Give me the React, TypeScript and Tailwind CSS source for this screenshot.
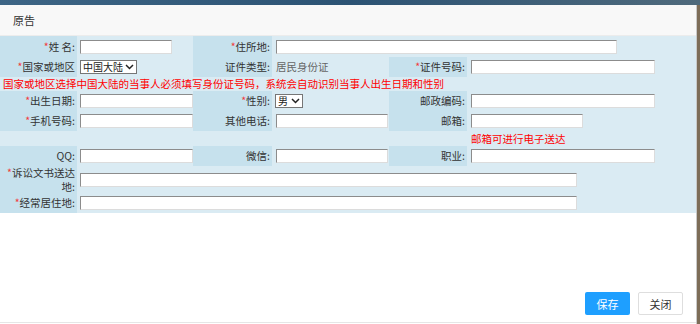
import React from "react";

const font = "font-['Noto_Sans_CJK_SC','Noto_Sans',sans-serif]";

function Label({ text, req }: { text: string; req?: boolean }) {
  return (
    <div className="flex items-center justify-end bg-[#c6e1ed] pr-[2px] text-right text-[#333]">
      <span>
        {req && <span className="text-[#f23c3c]">*</span>}
        {text}
      </span>
    </div>
  );
}

function Field({ w, pl = "pl-[3px]" }: { w: string; pl?: string }) {
  return (
    <div className={`flex items-center ${pl}`}>
      <input
        className={`h-[14px] ${w} border border-t-[#8c8c8c] border-l-[#8c8c8c] border-r-[#dcdcdc] border-b-[#dcdcdc] bg-white outline-none`}
      />
    </div>
  );
}

function Chevron() {
  return (
    <svg width="9" height="6" viewBox="0 0 9 6" className="shrink-0">
      <path d="M1 1 L4.5 4.5 L8 1" fill="none" stroke="#222" strokeWidth="1.5" />
    </svg>
  );
}

function Pick({ value, w }: { value: string; w: string }) {
  return (
    <div className="flex items-center pl-[3px]">
      <div className={`flex h-[14px] ${w} items-center justify-between whitespace-nowrap border border-[#767676] bg-white pl-[2px] pr-[2px] text-[10px] text-[#222]`}>
        <span>{value}</span>
        <Chevron />
      </div>
    </div>
  );
}

export default function App() {
  return (
    <div className={`h-[324px] w-[700px] overflow-hidden bg-[#6e5f4c] text-[10.5px] leading-[14px] ${font}`}>
      {/* page behind the dialog */}
      <div className="h-[5px] bg-gradient-to-r from-[#3d6585] via-[#2c5374] to-[#4f6a7c]" />

      <div className="flex h-[319px]">
        <div className="flex w-[697px] flex-col border-r border-[#c9c9c9] bg-white">
          {/* title */}
          <div className="flex h-[31px] items-center border-b border-[#ececec] bg-[#f8f8f8] pl-[13px] text-[11px] text-[#333]">
            原告
          </div>

          {/* form */}
          <div className="grid h-[177px] grid-cols-[77px_116px_79px_117px_78px_1fr] grid-rows-[21px_20px_14px_20px_20px_15px_20px_27px_20px] bg-[#daebf3]">
            <Label req text="姓 名:" />
            <Field w="w-[92px]" />
            <Label req text="住所地:" />
            <div className="col-span-3 flex items-center pl-[4px]">
              <input className="h-[14px] w-[341px] border border-t-[#8c8c8c] border-l-[#8c8c8c] border-r-[#dcdcdc] border-b-[#dcdcdc] bg-white outline-none" />
            </div>

            <Label req text="国家或地区" />
            <Pick value="中国大陆" w="w-[57px]" />
            <Label text="证件类型:" />
            <div className="flex items-center pl-[4px] text-[#666]">居民身份证</div>
            <Label req text="证件号码:" />
            <Field w="w-[184px]" pl="pl-[4px]" />

            <div className="col-span-6 flex items-center pl-[3px] text-[#ff0000]">
              国家或地区选择中国大陆的当事人必须填写身份证号码，系统会自动识别当事人出生日期和性别
            </div>

            <Label req text="出生日期:" />
            <Field w="w-[113px]" />
            <Label req text="性别:" />
            <Pick value="男" w="w-[28px]" />
            <Label text="邮政编码:" />
            <Field w="w-[184px]" pl="pl-[4px]" />

            <Label req text="手机号码:" />
            <Field w="w-[113px]" />
            <Label text="其他电话:" />
            <Field w="w-[112px]" pl="pl-[4px]" />
            <Label text="邮箱:" />
            <Field w="w-[112px]" pl="pl-[4px]" />

            <div className="col-span-5" />
            <div className="flex items-center pl-[4px] text-[#ff0000]">邮箱可进行电子送达</div>

            <Label text="QQ:" />
            <Field w="w-[113px]" />
            <Label text="微信:" />
            <Field w="w-[112px]" pl="pl-[4px]" />
            <Label text="职业:" />
            <Field w="w-[184px]" pl="pl-[4px]" />

            <Label req text="诉讼文书送达地:" />
            <div className="col-span-5 flex items-center pl-[3px]">
              <input className="h-[14px] w-[497px] border border-t-[#8c8c8c] border-l-[#8c8c8c] border-r-[#dcdcdc] border-b-[#dcdcdc] bg-white outline-none" />
            </div>

            <Label req text="经常居住地:" />
            <div className="col-span-5 flex items-center pl-[3px]">
              <input className="h-[14px] w-[497px] border border-t-[#8c8c8c] border-l-[#8c8c8c] border-r-[#dcdcdc] border-b-[#dcdcdc] bg-white outline-none" />
            </div>
          </div>

          {/* buttons */}
          <div className="mt-[79px] flex justify-end gap-[8px] pr-[13px]">
            <button className="h-[23px] w-[45px] rounded-[2px] bg-[#1e9fff] text-[11px] text-white">保存</button>
            <button className="h-[23px] w-[45px] rounded-[2px] border border-[#dedede] bg-white text-[11px] text-[#333]">关闭</button>
          </div>
          <div className="mt-[7px] h-[1px] bg-[#e6e6e6]" />
        </div>
        <div className="flex-1 bg-[#7d6d58]" />
      </div>
    </div>
  );
}
